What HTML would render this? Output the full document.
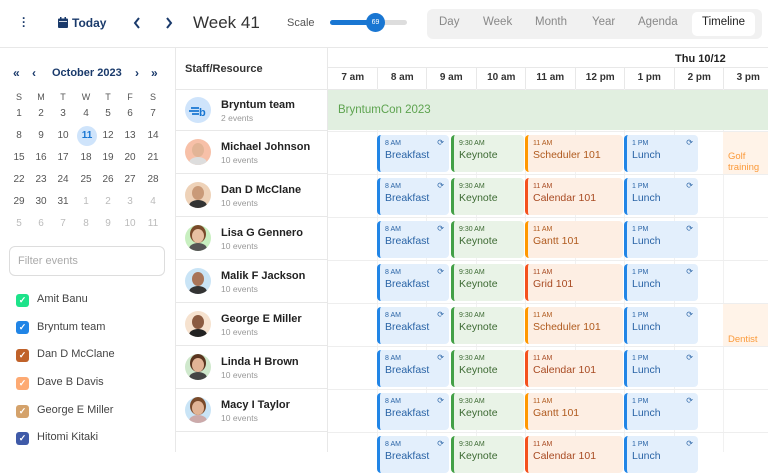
<!DOCTYPE html>
<html><head><meta charset="utf-8"><style>
*{box-sizing:border-box;margin:0;padding:0}
body{width:768px;height:452px;overflow:hidden;background:#fff;font-family:"Liberation Sans",sans-serif;color:#333;position:relative}
.a{position:absolute}
.hl{position:absolute;background:#e8e8e8}
.cal span{position:absolute;width:22px;text-align:center;font-size:10px;color:#555}
.cal span.o{color:#bbb}
.cb{position:absolute;left:16px;width:13px;height:13px;border-radius:3px;color:#fff;font-size:9px;line-height:13px;text-align:center;font-weight:bold}
.cl{position:absolute;left:37px;font-size:11px;color:#444}
.res{position:absolute;left:175px;width:152px;height:43px;border-bottom:1px solid #e8e8e8}
.av{position:absolute;left:10px;top:8px;width:26px;height:26px;border-radius:50%;overflow:hidden}
.av i{position:absolute;left:7px;top:4px;width:12px;height:14px;border-radius:50%;background:#e2b496}
.av b{position:absolute;left:4px;top:18px;width:18px;height:12px;border-radius:50% 50% 0 0;background:#333}
.rn{position:absolute;left:46px;top:10px;font-size:11px;font-weight:bold;color:#222}
.rs{position:absolute;left:46px;top:24px;font-size:8.5px;color:#999}
.ev{position:absolute;height:37px;border-radius:4px;border-left:3px solid;padding:4px 0 0 5px}
.ev s{text-decoration:none;display:block;font-size:7px;line-height:9px}
.ev u{text-decoration:none;display:block;font-size:10.5px;line-height:14px}
.bl{background:#e3effc;border-color:#2185e6;color:#2a64a6}
.gr{background:#e9f3e7;border-color:#43a047;color:#3d6a33}
.or{background:#fdeee3;border-color:#ff9800;color:#b05a1e}
.rd{background:#fdeee3;border-color:#f4511e;color:#a84a22}
.rf{position:absolute;right:5px;top:3px;font-size:8px}
.hr{position:absolute;top:67px;width:49.5px;height:22px;font-size:10px;font-weight:bold;color:#333;text-align:center;line-height:22px;border-left:1px solid #e8e8e8}
.vl{position:absolute;top:89px;width:1px;height:363px;background:#f1f1f1}
</style></head><body>
<!-- toolbar -->
<div class="a" style="left:22px;top:16px;font-size:12px;font-weight:bold;color:#1a3a6b;line-height:4px">·<br>·<br>·</div>
<svg class="a" style="left:58px;top:17px" width="10" height="11" viewBox="0 0 10 11"><rect x="0" y="1.5" width="10" height="9.5" rx="1" fill="#1a3a6b"/><rect x="2" y="0" width="1.5" height="3" fill="#1a3a6b"/><rect x="6.5" y="0" width="1.5" height="3" fill="#1a3a6b"/><rect x="1" y="4" width="8" height="0.8" fill="#fff"/></svg>
<div class="a" style="left:72px;top:16px;font-size:12px;color:#1a3a6b;font-weight:bold">Today</div>
<svg class="a" style="left:133px;top:17px" width="8" height="12"><path d="M6 1L2 6l4 5" stroke="#1a3a6b" stroke-width="2" fill="none"/></svg>
<svg class="a" style="left:165px;top:17px" width="8" height="12"><path d="M2 1l4 5-4 5" stroke="#1a3a6b" stroke-width="2" fill="none"/></svg>
<div class="a" style="left:193px;top:13px;font-size:17px;color:#333">Week 41</div>
<div class="a" style="left:287px;top:17px;font-size:11px;color:#555">Scale</div>
<div class="a" style="left:330px;top:20px;width:77px;height:5px;border-radius:3px;background:#ddd"></div>
<div class="a" style="left:330px;top:20px;width:45px;height:5px;border-radius:3px;background:#1976d2"></div>
<div class="a" style="left:366px;top:13px;width:19px;height:19px;border-radius:50%;background:#1976d2;color:#fff;font-size:7px;text-align:center;line-height:19px">69</div>
<div class="a" style="left:427px;top:9px;width:335px;height:30px;border-radius:6px;background:#f1f1f1"></div>
<div class="a" style="left:692px;top:12px;width:63px;height:24px;border-radius:5px;background:#fff"></div>
<div class="a" style="left:439px;top:16px;font-size:11.5px;color:#888">Day</div>
<div class="a" style="left:483px;top:16px;font-size:11.5px;color:#888">Week</div>
<div class="a" style="left:535px;top:16px;font-size:11.5px;color:#888">Month</div>
<div class="a" style="left:592px;top:16px;font-size:11.5px;color:#888">Year</div>
<div class="a" style="left:638px;top:16px;font-size:11.5px;color:#888">Agenda</div>
<div class="a" style="left:702px;top:16px;font-size:11.5px;color:#222">Timeline</div>
<div class="hl" style="left:0;top:47px;width:768px;height:1px"></div>
<!-- left panel -->
<div class="hl" style="left:175px;top:48px;width:1px;height:404px"></div>
<div class="a" style="left:13px;top:66px;font-size:12px;color:#1a3a6b;font-weight:bold">«</div>
<div class="a" style="left:32px;top:66px;font-size:12px;color:#1a3a6b;font-weight:bold">‹</div>
<div class="a" style="left:52px;top:67px;font-size:11px;color:#1a3a6b;font-weight:bold">October 2023</div>
<div class="a" style="left:135px;top:66px;font-size:12px;color:#1a3a6b;font-weight:bold">›</div>
<div class="a" style="left:151px;top:66px;font-size:12px;color:#1a3a6b;font-weight:bold">»</div>
<div class="a" style="left:77px;top:126px;width:20px;height:20px;border-radius:50%;background:#cfe4fb"></div>
<div class="cal">
<span style="left:8px;top:92px;font-size:9px">S</span><span style="left:30px;top:92px;font-size:9px">M</span><span style="left:52px;top:92px;font-size:9px">T</span><span style="left:75px;top:92px;font-size:9px">W</span><span style="left:97px;top:92px;font-size:9px">T</span><span style="left:119px;top:92px;font-size:9px">F</span><span style="left:142px;top:92px;font-size:9px">S</span>
<span style="left:8px;top:108px">1</span><span style="left:30px;top:108px">2</span><span style="left:52px;top:108px">3</span><span style="left:75px;top:108px">4</span><span style="left:97px;top:108px">5</span><span style="left:119px;top:108px">6</span><span style="left:142px;top:108px">7</span>
<span style="left:8px;top:130px">8</span><span style="left:30px;top:130px">9</span><span style="left:52px;top:130px">10</span><span style="left:76px;top:130px;color:#1976d2;font-weight:bold">11</span><span style="left:97px;top:130px">12</span><span style="left:119px;top:130px">13</span><span style="left:142px;top:130px">14</span>
<span style="left:8px;top:152px">15</span><span style="left:30px;top:152px">16</span><span style="left:52px;top:152px">17</span><span style="left:75px;top:152px">18</span><span style="left:97px;top:152px">19</span><span style="left:119px;top:152px">20</span><span style="left:142px;top:152px">21</span>
<span style="left:8px;top:174px">22</span><span style="left:30px;top:174px">23</span><span style="left:52px;top:174px">24</span><span style="left:75px;top:174px">25</span><span style="left:97px;top:174px">26</span><span style="left:119px;top:174px">27</span><span style="left:142px;top:174px">28</span>
<span style="left:8px;top:196px">29</span><span style="left:30px;top:196px">30</span><span style="left:52px;top:196px">31</span><span class="o" style="left:75px;top:196px">1</span><span class="o" style="left:97px;top:196px">2</span><span class="o" style="left:119px;top:196px">3</span><span class="o" style="left:142px;top:196px">4</span>
<span class="o" style="left:8px;top:218px">5</span><span class="o" style="left:30px;top:218px">6</span><span class="o" style="left:52px;top:218px">7</span><span class="o" style="left:75px;top:218px">8</span><span class="o" style="left:97px;top:218px">9</span><span class="o" style="left:119px;top:218px">10</span><span class="o" style="left:142px;top:218px">11</span>
</div>
<div class="a" style="left:9px;top:246px;width:156px;height:30px;border:1px solid #ddd;border-radius:6px;font-size:11px;color:#aaa;padding:8px 8px">Filter events</div>
<div class="cb" style="top:294px;background:#1de38a">✓</div><div class="cl" style="top:293px">Amit Banu</div>
<div class="cb" style="top:321px;background:#2185e6">✓</div><div class="cl" style="top:321px">Bryntum team</div>
<div class="cb" style="top:349px;background:#c0622a">✓</div><div class="cl" style="top:348px">Dan D McClane</div>
<div class="cb" style="top:377px;background:#fdaa73">✓</div><div class="cl" style="top:376px">Dave B Davis</div>
<div class="cb" style="top:405px;background:#d4a26b">✓</div><div class="cl" style="top:404px">George E Miller</div>
<div class="cb" style="top:432px;background:#3f5aa8">✓</div><div class="cl" style="top:431px">Hitomi Kitaki</div>
<!-- grid header -->
<div class="hl" style="left:327px;top:48px;width:1px;height:404px"></div>
<div class="a" style="left:185px;top:63px;font-size:11px;font-weight:bold;color:#333">Staff/Resource</div>
<div class="a" style="left:675px;top:53px;font-size:11px;font-weight:bold;color:#222">Thu 10/12</div>
<div class="hl" style="left:328px;top:67px;width:440px;height:1px"></div>
<div class="hl" style="left:175px;top:89px;width:593px;height:1px"></div>
<div class="hr" style="left:328px;border:0">7 am</div><div class="hr" style="left:377px">8 am</div><div class="hr" style="left:426px">9 am</div><div class="hr" style="left:476px">10 am</div><div class="hr" style="left:525px">11 am</div><div class="hr" style="left:575px">12 pm</div><div class="hr" style="left:624px">1 pm</div><div class="hr" style="left:674px">2 pm</div><div class="hr" style="left:723px">3 pm</div>
<div class="vl" style="left:377px"></div><div class="vl" style="left:426px"></div><div class="vl" style="left:476px"></div><div class="vl" style="left:525px"></div><div class="vl" style="left:575px"></div><div class="vl" style="left:624px"></div><div class="vl" style="left:674px"></div><div class="vl" style="left:723px"></div>
<!-- row lines -->
<div class="hl" style="left:328px;top:131px;width:440px;height:1px;background:#eee"></div>
<div class="hl" style="left:328px;top:174px;width:440px;height:1px;background:#eee"></div>
<div class="hl" style="left:328px;top:217px;width:440px;height:1px;background:#eee"></div>
<div class="hl" style="left:328px;top:260px;width:440px;height:1px;background:#eee"></div>
<div class="hl" style="left:328px;top:303px;width:440px;height:1px;background:#eee"></div>
<div class="hl" style="left:328px;top:346px;width:440px;height:1px;background:#eee"></div>
<div class="hl" style="left:328px;top:389px;width:440px;height:1px;background:#eee"></div>
<div class="hl" style="left:328px;top:432px;width:440px;height:1px;background:#eee"></div>
<!-- resources -->
<div class="res" style="top:89px;height:42px"><div class="av" style="background:#cfe4fb"><svg width="26" height="26"><path d="M6 11h8M4 14h10M7 17h7" stroke="#1976d2" stroke-width="1.8"/><text x="14" y="19" font-size="11" font-weight="bold" fill="#1976d2" font-family="Liberation Sans">b</text></svg></div><div class="rn">Bryntum team</div><div class="rs">2 events</div></div>
<div class="res" style="top:131px"><div class="av" style="background:#f7c0a8"><i></i><b style="background:#ddd"></b></div><div class="rn">Michael Johnson</div><div class="rs">10 events</div></div>
<div class="res" style="top:174px"><div class="av" style="background:#eed2b8"><i style="background:#c99a78"></i><b></b></div><div class="rn">Dan D McClane</div><div class="rs">10 events</div></div>
<div class="res" style="top:217px"><div class="av" style="background:#c8efc0"><i style="background:#e8c0a2;box-shadow:0 -2px 0 2px #7a4a2a"></i><b style="background:#555"></b></div><div class="rn">Lisa G Gennero</div><div class="rs">10 events</div></div>
<div class="res" style="top:260px"><div class="av" style="background:#c9e4f6"><i style="background:#a87458"></i><b></b></div><div class="rn">Malik F Jackson</div><div class="rs">10 events</div></div>
<div class="res" style="top:303px"><div class="av" style="background:#f6e2cf"><i style="background:#8a5a40"></i><b style="background:#222"></b></div><div class="rn">George E Miller</div><div class="rs">10 events</div></div>
<div class="res" style="top:346px"><div class="av" style="background:#cfe8cc"><i style="box-shadow:0 -2px 0 2px #5a3520"></i><b style="background:#444"></b></div><div class="rn">Linda H Brown</div><div class="rs">10 events</div></div>
<div class="res" style="top:389px"><div class="av" style="background:#c9e4f6"><i style="box-shadow:0 -2px 0 2px #7a4a2a"></i><b style="background:#caa"></b></div><div class="rn">Macy I Taylor</div><div class="rs">10 events</div></div>
<!-- Bryntum con -->
<div class="a" style="left:328px;top:90px;width:440px;height:40px;background:#e1efe0"></div>
<div class="a" style="left:338px;top:104px;font-size:11.5px;color:#5da34f">BryntumCon 2023</div>
<!-- side events -->
<div class="a" style="left:723px;top:132px;width:45px;height:42px;background:#fff3e8"></div>
<div class="a" style="left:728px;top:151px;font-size:9.5px;color:#fb9a3a;line-height:11px">Golf<br>training</div>
<div class="a" style="left:723px;top:304px;width:45px;height:42px;background:#fff3e8"></div>
<div class="a" style="left:728px;top:334px;font-size:9.5px;color:#fb9a3a">Dentist</div>
<!-- events rows -->
<div class="ev bl" style="left:377px;top:135px;width:72px"><s>8 AM</s><u>Breakfast</u><span class="rf">⟳</span></div><div class="ev gr" style="left:451px;top:135px;width:73px"><s>9:30 AM</s><u>Keynote</u></div><div class="ev or" style="left:525px;top:135px;width:98px"><s>11 AM</s><u>Scheduler 101</u></div><div class="ev bl" style="left:624px;top:135px;width:74px"><s>1 PM</s><u>Lunch</u><span class="rf">⟳</span></div>
<div class="ev bl" style="left:377px;top:178px;width:72px"><s>8 AM</s><u>Breakfast</u><span class="rf">⟳</span></div><div class="ev gr" style="left:451px;top:178px;width:73px"><s>9:30 AM</s><u>Keynote</u></div><div class="ev rd" style="left:525px;top:178px;width:98px"><s>11 AM</s><u>Calendar 101</u></div><div class="ev bl" style="left:624px;top:178px;width:74px"><s>1 PM</s><u>Lunch</u><span class="rf">⟳</span></div>
<div class="ev bl" style="left:377px;top:221px;width:72px"><s>8 AM</s><u>Breakfast</u><span class="rf">⟳</span></div><div class="ev gr" style="left:451px;top:221px;width:73px"><s>9:30 AM</s><u>Keynote</u></div><div class="ev or" style="left:525px;top:221px;width:98px"><s>11 AM</s><u>Gantt 101</u></div><div class="ev bl" style="left:624px;top:221px;width:74px"><s>1 PM</s><u>Lunch</u><span class="rf">⟳</span></div>
<div class="ev bl" style="left:377px;top:264px;width:72px"><s>8 AM</s><u>Breakfast</u><span class="rf">⟳</span></div><div class="ev gr" style="left:451px;top:264px;width:73px"><s>9:30 AM</s><u>Keynote</u></div><div class="ev rd" style="left:525px;top:264px;width:98px"><s>11 AM</s><u>Grid 101</u></div><div class="ev bl" style="left:624px;top:264px;width:74px"><s>1 PM</s><u>Lunch</u><span class="rf">⟳</span></div>
<div class="ev bl" style="left:377px;top:307px;width:72px"><s>8 AM</s><u>Breakfast</u><span class="rf">⟳</span></div><div class="ev gr" style="left:451px;top:307px;width:73px"><s>9:30 AM</s><u>Keynote</u></div><div class="ev or" style="left:525px;top:307px;width:98px"><s>11 AM</s><u>Scheduler 101</u></div><div class="ev bl" style="left:624px;top:307px;width:74px"><s>1 PM</s><u>Lunch</u><span class="rf">⟳</span></div>
<div class="ev bl" style="left:377px;top:350px;width:72px"><s>8 AM</s><u>Breakfast</u><span class="rf">⟳</span></div><div class="ev gr" style="left:451px;top:350px;width:73px"><s>9:30 AM</s><u>Keynote</u></div><div class="ev rd" style="left:525px;top:350px;width:98px"><s>11 AM</s><u>Calendar 101</u></div><div class="ev bl" style="left:624px;top:350px;width:74px"><s>1 PM</s><u>Lunch</u><span class="rf">⟳</span></div>
<div class="ev bl" style="left:377px;top:393px;width:72px"><s>8 AM</s><u>Breakfast</u><span class="rf">⟳</span></div><div class="ev gr" style="left:451px;top:393px;width:73px"><s>9:30 AM</s><u>Keynote</u></div><div class="ev or" style="left:525px;top:393px;width:98px"><s>11 AM</s><u>Gantt 101</u></div><div class="ev bl" style="left:624px;top:393px;width:74px"><s>1 PM</s><u>Lunch</u><span class="rf">⟳</span></div>
<div class="ev bl" style="left:377px;top:436px;width:72px"><s>8 AM</s><u>Breakfast</u><span class="rf">⟳</span></div><div class="ev gr" style="left:451px;top:436px;width:73px"><s>9:30 AM</s><u>Keynote</u></div><div class="ev rd" style="left:525px;top:436px;width:98px"><s>11 AM</s><u>Calendar 101</u></div><div class="ev bl" style="left:624px;top:436px;width:74px"><s>1 PM</s><u>Lunch</u><span class="rf">⟳</span></div>
</body></html>
